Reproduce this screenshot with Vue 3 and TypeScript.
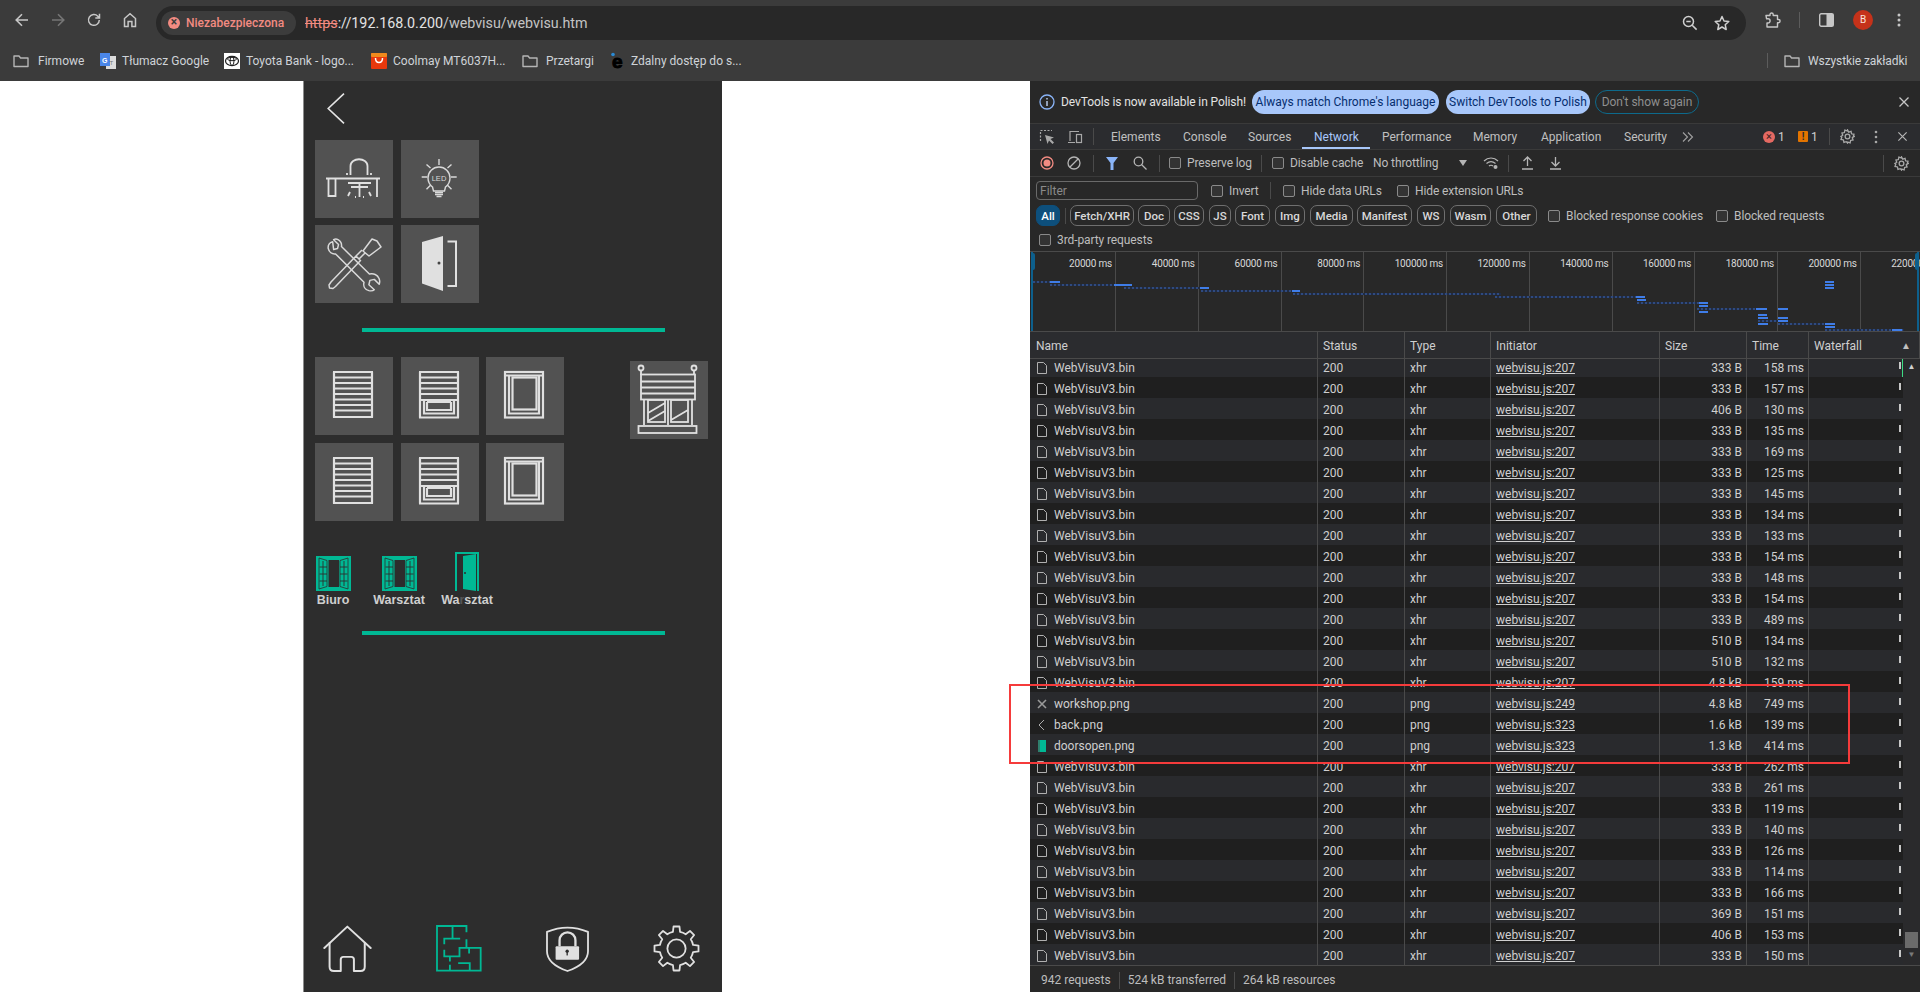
<script setup lang="ts">
const bookmarks = [
  { label: 'Firmowe', icon: 'folder', width: 87, gap: 9 },
  { label: 'Tłumacz Google', icon: 'translate', width: 124, gap: 6 },
  { label: 'Toyota Bank - logo...', icon: 'toyota', width: 147, gap: 6 },
  { label: 'Coolmay MT6037H...', icon: 'coolmay', width: 151, gap: 6 },
  { label: 'Przetargi', icon: 'folder', width: 88, gap: 8 },
  { label: 'Zdalny dostęp do s...', icon: 'e', width: 140, gap: 5 },
]
const tabs = [
  { label: 'Elements', width: 72 },
  { label: 'Console', width: 65 },
  { label: 'Sources', width: 66 },
  { label: 'Network', width: 68, active: true },
  { label: 'Performance', width: 91 },
  { label: 'Memory', width: 68 },
  { label: 'Application', width: 83 },
  { label: 'Security', width: 70 },
]
const chips = [
  { label: 'Fetch/XHR', width: 64, gap: 4 },
  { label: 'Doc', width: 32, gap: 4 },
  { label: 'CSS', width: 30, gap: 5 },
  { label: 'JS', width: 22, gap: 4 },
  { label: 'Font', width: 35, gap: 5 },
  { label: 'Img', width: 30, gap: 5 },
  { label: 'Media', width: 43, gap: 4 },
  { label: 'Manifest', width: 55, gap: 5 },
  { label: 'WS', width: 28, gap: 5 },
  { label: 'Wasm', width: 41, gap: 5 },
  { label: 'Other', width: 41, gap: 0 },
]
const ticks = [20000, 40000, 60000, 80000, 100000, 120000, 140000, 160000, 180000, 200000, 220000]
const bars: [number, number, number, boolean?][] = [
  [281, 3, 25], [281, 20, 10, true], [284, 20, 82], [284, 84, 18, true], [287, 94, 85], [287, 170, 9, true],
  [290, 171, 99], [290, 262, 8, true], [293, 263, 208], [296, 465, 150], [296, 606, 9, true],
  [299, 607, 9, true], [302, 607, 71], [302, 669, 9, true], [305, 669, 9, true], [308, 667, 70], [308, 726, 11, true], [308, 748, 10, true],
  [311, 669, 9, true], [314, 728, 9, true], [317, 728, 10, true], [317, 748, 10, true], [320, 728, 20], [320, 748, 10, true],
  [323, 728, 10, true], [323, 748, 57], [323, 795, 10, true], [326, 795, 10, true], [329, 795, 79], [329, 862, 10, true],
  [281, 795, 9, true], [284, 795, 9, true], [287, 795, 9, true],
]
const rows = [
  ['WebVisuV3.bin', '207', '333 B', '158'], ['WebVisuV3.bin', '207', '333 B', '157'], ['WebVisuV3.bin', '207', '406 B', '130'],
  ['WebVisuV3.bin', '207', '333 B', '135'], ['WebVisuV3.bin', '207', '333 B', '169'], ['WebVisuV3.bin', '207', '333 B', '125'],
  ['WebVisuV3.bin', '207', '333 B', '145'], ['WebVisuV3.bin', '207', '333 B', '134'], ['WebVisuV3.bin', '207', '333 B', '133'],
  ['WebVisuV3.bin', '207', '333 B', '154'], ['WebVisuV3.bin', '207', '333 B', '148'], ['WebVisuV3.bin', '207', '333 B', '154'],
  ['WebVisuV3.bin', '207', '333 B', '489'], ['WebVisuV3.bin', '207', '510 B', '134'], ['WebVisuV3.bin', '207', '510 B', '132'],
  ['WebVisuV3.bin', '207', '4.8 kB', '159'], ['workshop.png', '249', '4.8 kB', '749'], ['back.png', '323', '1.6 kB', '139'],
  ['doorsopen.png', '323', '1.3 kB', '414'], ['WebVisuV3.bin', '207', '333 B', '262'], ['WebVisuV3.bin', '207', '333 B', '261'],
  ['WebVisuV3.bin', '207', '333 B', '119'], ['WebVisuV3.bin', '207', '333 B', '140'], ['WebVisuV3.bin', '207', '333 B', '126'],
  ['WebVisuV3.bin', '207', '333 B', '114'], ['WebVisuV3.bin', '207', '333 B', '166'], ['WebVisuV3.bin', '207', '369 B', '151'],
  ['WebVisuV3.bin', '207', '406 B', '153'], ['WebVisuV3.bin', '207', '333 B', '150'],
].map(([name, line, size, time]) => ({ name, line, size, time, type: name.endsWith('.png') ? 'png' : 'xhr' }))

const fullSlats = [15, 20.5, 26, 31.5, 37, 42.5, 48, 53.5, 60]
const halfSlats = [15, 20.5, 26, 31.5, 37, 43]

function gearPath(cx: number, cy: number, ro: number, ri: number, n: number): string {
  const pt = (r: number, a: number) => `${(cx + r * Math.cos(a)).toFixed(1)} ${(cy + r * Math.sin(a)).toFixed(1)}`
  let d = ''
  for (let i = 0; i < n; i++) {
    const a = (i * 2 * Math.PI) / n - Math.PI / 2
    const step = (2 * Math.PI) / n
    d += `${i === 0 ? 'M' : 'L'}${pt(ri, a - step * 0.27)} L${pt(ro, a - step * 0.17)} L${pt(ro, a + step * 0.17)} L${pt(ri, a + step * 0.27)} A${ri} ${ri} 0 0 1 ${pt(ri, a + step * 0.73)} `
  }
  return d + 'Z'
}
const gearD = gearPath(1130, 145, 68, 52, 8)
</script>

<template>
  <div class="app">
    <header class="toolbar">
      <svg class="nav-ic first" width="16" height="16" viewBox="0 0 16 16"><path d="M14 8H2.5M8 2.2 2.2 8 8 13.8" fill="none" stroke="#c7c7c7" stroke-width="1.6"/></svg>
      <svg class="nav-ic" width="16" height="16" viewBox="0 0 16 16"><path d="M2 8h11.5M8 2.2 13.8 8 8 13.8" fill="none" stroke="#767676" stroke-width="1.6"/></svg>
      <svg class="nav-ic" width="16" height="16" viewBox="0 0 16 16"><path d="M13.3 8a5.4 5.4 0 1 1-1.5-3.8L13.5 6M13.5 1.8V6H9.3" fill="none" stroke="#c7c7c7" stroke-width="1.5"/></svg>
      <svg class="nav-ic" width="16" height="16" viewBox="0 0 16 16"><path d="M2.5 14.5V6.5L8 1.8l5.5 4.7v8h-3.6V9.5H6.1v5z" fill="none" stroke="#c7c7c7" stroke-width="1.5"/></svg>
      <div class="omnibox">
        <div class="chip-warn">
          <span class="warn-dot">×</span>
          <span>Niezabezpieczona</span>
        </div>
        <div class="url"><span class="https">https</span><span class="host">://192.168.0.200</span><span class="path">/webvisu/webvisu.htm</span></div>
        <svg class="omni-ic" width="16" height="16" viewBox="0 0 16 16"><circle cx="6.5" cy="6.5" r="5" fill="none" stroke="#d0d0d0" stroke-width="1.5"/><path d="M4.3 6.5h4.4M10.2 10.2l4.4 4.4" stroke="#d0d0d0" stroke-width="1.5"/></svg>
        <svg class="omni-ic star" width="16" height="16" viewBox="0 0 16 16"><path d="M8 1.5l2 4.5 4.8.5-3.6 3.2 1 4.8L8 12l-4.2 2.5 1-4.8L1.2 6.5 6 6z" fill="none" stroke="#d0d0d0" stroke-width="1.5" stroke-linejoin="round"/></svg>
      </div>
      <svg class="tool-ext" width="16" height="16" viewBox="0 0 16 16"><path d="M1 3.5h4V2.6a1.6 1.6 0 0 1 3.2 0v.9h4.3v4h1a1.6 1.6 0 0 1 0 3.2h-1v4.3H2V11h1a2 2 0 0 0 0-4.2H1.6z" fill="none" stroke="#c7c7c7" stroke-width="1.4" stroke-linejoin="round"/></svg>
      <span class="tool-sep"></span>
      <svg class="tool-side" width="15" height="14" viewBox="0 0 15 14"><rect x=".7" y=".7" width="13.6" height="12.6" rx="1.5" fill="none" stroke="#c7c7c7" stroke-width="1.4"/><rect x="7.5" y="1" width="6.8" height="12" fill="#c7c7c7"/></svg>
      <span class="avatar">B</span>
      <svg class="tool-menu" width="4" height="14" viewBox="0 0 4 14"><circle cx="2" cy="2" r="1.5" fill="#c7c7c7"/><circle cx="2" cy="7" r="1.5" fill="#c7c7c7"/><circle cx="2" cy="12" r="1.5" fill="#c7c7c7"/></svg>
    </header>

    <nav class="bookmarks">
      <div v-for="b in bookmarks" :key="b.label" class="bm" :style="{ width: b.width + 'px', gap: b.gap + 'px' }">
        <svg v-if="b.icon === 'folder'" width="16" height="16" viewBox="0 0 16 16"><path d="M1 3h5l1.6 2H15v8.5H1z" fill="none" stroke="#b5b5b5" stroke-width="1.4" stroke-linejoin="round"/></svg>
        <svg v-else-if="b.icon === 'translate'" width="16" height="16" viewBox="0 0 16 16"><rect x="6" y="3" width="10" height="13" fill="#dcdcdc"/><rect width="10" height="13" fill="#4a86e8"/><text x="2" y="9.5" font-size="7" font-weight="700" fill="#fff" font-family="Liberation Sans, sans-serif">G</text><text x="9.5" y="12" font-size="6" fill="#777" font-family="Liberation Sans, sans-serif">T</text></svg>
        <svg v-else-if="b.icon === 'toyota'" width="16" height="16" viewBox="0 0 16 16"><rect width="16" height="16" fill="#fff"/><ellipse cx="8" cy="8" rx="6.5" ry="4.6" fill="none" stroke="#222" stroke-width="1.2"/><ellipse cx="8" cy="8" rx="2" ry="4.4" fill="none" stroke="#222"/><ellipse cx="8" cy="6" rx="4.5" ry="1.7" fill="none" stroke="#222"/></svg>
        <svg v-else-if="b.icon === 'coolmay'" width="16" height="16" viewBox="0 0 16 16"><rect width="16" height="16" rx="1" fill="#e8380d"/><rect width="16" height="4" rx="1" fill="#f08a1d"/><path d="M4.5 5c0 6 7 6 7 0" fill="none" stroke="#fff" stroke-width="1.5"/></svg>
        <svg v-else width="16" height="18" viewBox="0 0 16 18"><circle cx="3" cy="2.5" r="1.8" fill="#2a8bd6"/><text x="2" y="16" font-size="19" font-weight="700" fill="#000" stroke="#000" font-family="Liberation Sans, sans-serif">e</text></svg>
        <span>{{ b.label }}</span>
      </div>
      <div class="bm-end">
        <span class="bm-sep"></span>
        <svg width="16" height="16" viewBox="0 0 16 16"><path d="M1 3h5l1.6 2H15v8.5H1z" fill="none" stroke="#b5b5b5" stroke-width="1.4" stroke-linejoin="round"/></svg>
        <span>Wszystkie zakładki</span>
      </div>
    </nav>

    <main class="main">
      <section class="page">
        <div class="panel">
          <svg class="back" width="18" height="31" viewBox="0 0 18 31"><path d="M17 .7 1.200 15.500 17 30.300" fill="none" stroke="#e4e4e4" stroke-width="1.600"/></svg>

          <div class="tiles-a">
            <div class="tile">
              <svg viewBox="0 0 78 78" width="78" height="78" fill="none" stroke="#e0e0e0" stroke-width="1.800">
                <path d="M11 38.500H65M13.500 38.500V57M20.500 39V56H13.500M62 39V57"/>
                <path d="M35.500 35V26c0-9 17-9 17 0v9M32 35v-2M56 35v-2"/>
                <path d="M33 43H56M44.500 43V57M36 47h17M35 52l-2 4M54 52l2 4M40 57h1M48 57h1"/>
              </svg>
            </div>
            <div class="tile">
              <svg viewBox="0 0 78 78" width="78" height="78" fill="none" stroke="#d9d9d9" stroke-width="1.400">
                <path d="M31.500 47c-2.500-2-4.500-5-4.500-9a11 11 0 0 1 22 0c0 4-2 7-4.500 9l-1 4H32.500z"/>
                <path d="M34 52.500h8M34 54.500h8M35.500 56.500h5" stroke-width="1.600"/>
                <path d="M38 19v6M25.500 24.500l4 3.500M50.500 24.500l-4 3.500M20.700 37h5.600M50 37h5.700M25.500 49.300l4-4M50.500 49.300l-4-4"/>
                <text x="38" y="40.500" font-size="7.500" fill="#d9d9d9" stroke="none" text-anchor="middle" font-family="Liberation Sans, sans-serif">LED</text>
              </svg>
            </div>
            <div class="tile">
              <svg viewBox="0 0 78 78" width="78" height="78" fill="none" stroke="#d9d9d9" stroke-width="1.500" stroke-linejoin="round">
                <path d="M18 17.500c-3 1-5 3.500-4.500 7 .8 3.500 3.800 6 7.500 5.500L50 59c-1 4 1 7.500 5 8.500 2.500.5 4.500 0 5.500-1L55 61.500l1-4.500 4.500-1 5 5c1.500-4-.5-8.500-4-10-2-1-4-1-6-.5L27 22.500c.5-3-1-5.500-3.500-7-1.500-.8-3-.8-4.500 0l5 5-1 4-4 1z" transform="translate(0 -.5) scale(.98)"/>
                <path d="M48 26 57 14l5 2 4 6-12 9zM50 28l-6 6-3-3 6-6M41 31 16 57l-2 3 .5 3 3.500 .500 2.500-2 25-26z"/>
              </svg>
            </div>
            <div class="tile">
              <svg viewBox="0 0 78 78" width="78" height="78">
                <path d="M21 17 42 11V66L21 58.500z" fill="#e0e0e0"/>
                <circle cx="38" cy="38" r="1.500" fill="#444"/>
                <path d="M46.500 16.500H55V61H46.500" fill="none" stroke="#e0e0e0" stroke-width="2"/>
              </svg>
            </div>
          </div>

          <div class="rule rule-a"></div>

          <div class="shades-row">
            <div class="tiles-b">
              <div v-for="rowIdx in 2" :key="rowIdx" class="tiles-b-row">
                <div class="tile">
                  <svg viewBox="0 0 78 78" width="78" height="78" fill="none" stroke="#e0e0e0" stroke-width="2.200">
                    <path d="M19 15V60.500M57 15V60.500"/>
                    <path v-for="y in fullSlats" :key="y" :d="`M18 ${y}H58`"/>
                  </svg>
                </div>
                <div class="tile">
                  <svg viewBox="0 0 78 78" width="78" height="78" fill="none" stroke="#e0e0e0" stroke-width="2.200">
                    <path d="M19 15V60.500M57 15V60.500M18 60.500H58"/>
                    <path v-for="y in halfSlats" :key="y" :d="`M18 ${y}H58`"/>
                    <path d="M23 43V56.500H53V43M26 45V53H50V45M26 45H50"/>
                  </svg>
                </div>
                <div class="tile">
                  <svg viewBox="0 0 78 78" width="78" height="78" fill="none" stroke="#e0e0e0" stroke-width="2.200">
                    <rect x="19" y="15" width="38" height="45.500"/>
                    <path d="M19 18.500H57"/>
                    <path d="M23 18.500V56.500H53V18.500"/>
                    <rect x="26.500" y="20.500" width="24" height="32"/>
                  </svg>
                </div>
              </div>
            </div>
            <div class="tile tile-side">
              <svg viewBox="0 0 78 78" width="78" height="78" fill="none" stroke="#e0e0e0" stroke-width="1.800">
                <circle cx="11" cy="7" r="2.500"/><circle cx="64" cy="7" r="2.500"/>
                <path d="M11 9.500V14M64 9.500V14"/>
                <rect x="11" y="13.500" width="54" height="25"/>
                <path d="M11 20.500H65M11 26.500H65M11 32.500H65"/>
                <path d="M14 38.500V64M62 38.500V64M38 38.500V64"/>
                <rect x="18" y="39" width="17" height="22"/>
                <rect x="41" y="39" width="17" height="22"/>
                <path d="M18 52 35 42M18 60 35 50M41 59 58 49"/>
                <rect x="8.500" y="65" width="58" height="7"/>
              </svg>
            </div>
          </div>

          <div class="doors">
            <div class="door-item">
              <svg viewBox="0 0 35 35" width="35" height="35">
                <rect width="35" height="35" fill="#00b894"/>
                <path d="M12.500 4H23V31H12.500z" fill="#2d2d2d"/>
                <path d="M3 2 11 4.500V30.500L3 33zM32 2 24 4.500V30.500L32 33z" fill="none" stroke="#2d2d2d" stroke-width=".8"/>
                <path d="M7 5V30M3.500 11H11M3.500 18H11M3.500 25H11M28 5V30M24 11H31.500M24 18H31.500M24 25H31.500" stroke="#2d2d2d" stroke-width=".9"/>
              </svg>
              <span class="door-label">Biuro</span>
            </div>
            <div class="door-item">
              <svg viewBox="0 0 35 35" width="35" height="35">
                <rect width="35" height="35" fill="#00b894"/>
                <path d="M12.500 4H23V31H12.500z" fill="#2d2d2d"/>
                <path d="M3 2 11 4.500V30.500L3 33zM32 2 24 4.500V30.500L32 33z" fill="none" stroke="#2d2d2d" stroke-width=".8"/>
                <path d="M7 5V30M3.500 11H11M3.500 18H11M3.500 25H11M28 5V30M24 11H31.500M24 18H31.500M24 25H31.500" stroke="#2d2d2d" stroke-width=".9"/>
              </svg>
              <span class="door-label">Warsztat</span>
            </div>
            <div class="door-item door-item-last">
              <svg viewBox="0 0 24 39" width="24" height="39">
                <path d="M1 39V1H23V39" fill="none" stroke="#00b894" stroke-width="2"/>
                <path d="M8 4 21 2V39L8 37z" fill="#00b894"/>
                <circle cx="10" cy="21" r="1" fill="#2d2d2d"/>
              </svg>
              <span class="door-label">Wa<span class="faded">r</span>sztat</span>
            </div>
          </div>

          <div class="rule rule-b"></div>

          <div class="bottom-nav">
            <svg viewBox="68 73 149 143" width="49" height="47" fill="none" stroke="#e0e0e0" stroke-width="6" stroke-linecap="round" stroke-linejoin="round">
              <path d="M72 143 142 78 213 143"/>
              <path d="M88 128V200q0 13 13 13H122V178q0-8 8-8H154q8 0 8 8V213H182q13 0 13-13V128"/>
            </svg>
            <svg viewBox="408 76 139 140" width="46" height="47" fill="none" stroke="#00b894" stroke-width="5.500">
              <path d="M500 97V78H411V213H543V144H479V170H433V150M433 133V116H458V78M458 116H481M500 118V144M508 144V161M450 170V185M450 195V213M475 190H510V213"/>
            </svg>
            <svg viewBox="738 74 130 142" width="43" height="47">
              <path d="M741 95q62-26 124 0v58q0 38-62 60-62-22-62-60z" fill="none" stroke="#e0e0e0" stroke-width="5.500" stroke-linejoin="round"/>
              <path d="M779 138v-18a24 24 0 0 1 48 0v18" fill="none" stroke="#e0e0e0" stroke-width="7"/>
              <rect x="767" y="138" width="71" height="41" rx="3" fill="#e0e0e0"/>
              <circle cx="802" cy="153" r="5" fill="#2d2d2d"/>
              <rect x="800" y="153" width="4" height="13" fill="#2d2d2d"/>
            </svg>
            <svg viewBox="1058 73 144 144" width="47" height="47" fill="none" stroke="#e0e0e0" stroke-width="5.500" stroke-linejoin="round">
              <path :d="gearD"/>
              <circle cx="1130" cy="145" r="28"/>
            </svg>
          </div>
        </div>
      </section>

      <section class="devtools">
        <div class="infobar">
          <svg width="16" height="16" viewBox="0 0 16 16"><circle cx="8" cy="8" r="7" fill="none" stroke="#8ab4f8" stroke-width="1.300"/><path d="M8 7v5M8 4v1.600" stroke="#c0d4f5" stroke-width="1.400"/></svg>
          <span class="info-text">DevTools is now available in Polish!</span>
          <span class="pill pill-a">Always match Chrome's language</span>
          <span class="pill pill-b">Switch DevTools to Polish</span>
          <span class="pill pill-c">Don't show again</span>
          <svg class="info-x" width="12" height="12" viewBox="0 0 12 12"><path d="M1.500 1.500l9 9M10.500 1.500l-9 9" stroke="#c7c7c7" stroke-width="1.300"/></svg>
        </div>

        <div class="dt-tabs">
          <svg class="ic-inspect" width="16" height="16" viewBox="0 0 16 16" fill="none" stroke="#a8a8a8" stroke-width="1.200"><path d="M1.500 12V1.500H13" stroke-dasharray="2 1.500"/><path d="M6 6l2.500 9 1.500-3.500L13.500 15l1.500-1.500-3.500-3.500 3.500-1.500z" fill="#a8a8a8" stroke="none"/></svg>
          <svg class="ic-device" width="16" height="16" viewBox="0 0 16 16" fill="none" stroke="#a8a8a8" stroke-width="1.200"><path d="M3 12V2.500h9M1 13.500H8"/><rect x="9.500" y="5.500" width="5" height="8"/></svg>
          <span class="v-sep sep-tabs"></span>
          <div v-for="t in tabs" :key="t.label" class="dt-tab" :class="{ active: t.active }" :style="{ width: t.width + 'px' }">{{ t.label }}</div>
          <svg class="more" width="12" height="10" viewBox="0 0 12 10" fill="none" stroke="#a0a0a0" stroke-width="1.100"><path d="M1 .5 5.500 5 1 9.500M6 .5 10.500 5 6 9.500"/></svg>
          <div class="tab-right">
            <span class="err-dot">×</span><span class="count">1</span>
            <span class="warn-sq">!</span><span class="count">1</span>
            <span class="v-sep"></span>
            <svg width="15" height="15" viewBox="0 0 16 16" fill="none" stroke="#a8a8a8" stroke-width="1.400"><circle cx="8" cy="8" r="2.500"/><path d="M8 1l1.300 2.300 2.500-.8.500 2.600 2.600.5-.8 2.400L15 8l-1.900 1.300.8 2.400-2.600.5-.5 2.600-2.500-.8L8 15l-1.300-1.500-2.500.8-.5-2.600-2.600-.5.8-2.400L1 8l1.900-1.300-.8-2.400 2.600-.5.500-2.600 2.500.8z"/></svg>
            <svg class="dots" width="4" height="14" viewBox="0 0 4 14"><circle cx="2" cy="2" r="1.300" fill="#a8a8a8"/><circle cx="2" cy="7" r="1.300" fill="#a8a8a8"/><circle cx="2" cy="12" r="1.300" fill="#a8a8a8"/></svg>
            <svg width="11" height="11" viewBox="0 0 12 12"><path d="M1.500 1.500l9 9M10.500 1.500l-9 9" stroke="#b5b5b5" stroke-width="1.300"/></svg>
          </div>
        </div>

        <div class="net-bar">
          <svg class="a-record" width="14" height="14" viewBox="0 0 14 14"><circle cx="7" cy="7" r="6" fill="none" stroke="#f28b82" stroke-width="1.300"/><circle cx="7" cy="7" r="3.500" fill="#f28b82"/></svg>
          <svg class="a-clear" width="14" height="14" viewBox="0 0 14 14" fill="none" stroke="#b5b5b5" stroke-width="1.300"><circle cx="7" cy="7" r="6"/><path d="M3 11 11 3"/></svg>
          <span class="v-sep a-sep1"></span>
          <svg class="a-filter" width="12" height="13" viewBox="0 0 12 13"><path d="M0 0h12L7.500 6v7h-3V6z" fill="#8ab4f8"/></svg>
          <svg class="a-search" width="14" height="14" viewBox="0 0 14 14" fill="none" stroke="#b5b5b5" stroke-width="1.300"><circle cx="5.500" cy="5.500" r="4.300"/><path d="M8.500 8.500l5 5"/></svg>
          <span class="v-sep a-sep2"></span>
          <span class="cb a-cb1"></span><span class="lbl a-l1">Preserve log</span>
          <span class="v-sep a-sep3"></span>
          <span class="cb a-cb2"></span><span class="lbl a-l2">Disable cache</span>
          <span class="lbl a-l3">No throttling</span>
          <span class="arrow a-arrow"></span>
          <svg class="a-wifi" width="16" height="14" viewBox="0 0 16 14" fill="none" stroke="#b5b5b5" stroke-width="1.200"><path d="M1 5c4-4 10-4 14 0M3.500 7.500c3-2.500 6-2.500 9 0M6 10c1-1 3-1 4 0"/><circle cx="12.500" cy="11" r="2" fill="#b5b5b5" stroke="none"/></svg>
          <span class="v-sep a-sep4"></span>
          <svg class="a-up" width="13" height="14" viewBox="0 0 13 14" fill="none" stroke="#b5b5b5" stroke-width="1.300"><path d="M6.500 10V1M2.500 5l4-4 4 4M1 13H12"/></svg>
          <svg class="a-down" width="13" height="14" viewBox="0 0 13 14" fill="none" stroke="#b5b5b5" stroke-width="1.300"><path d="M6.500 1v9M2.500 6l4 4 4-4M1 13H12"/></svg>
          <span class="v-sep a-sep5"></span>
          <svg class="a-gear" width="15" height="15" viewBox="0 0 16 16" fill="none" stroke="#a8a8a8" stroke-width="1.400"><circle cx="8" cy="8" r="2.500"/><path d="M8 1l1.300 2.300 2.500-.8.500 2.600 2.600.5-.8 2.400L15 8l-1.900 1.300.8 2.400-2.600.5-.5 2.600-2.500-.8L8 15l-1.300-1.500-2.500.8-.5-2.600-2.600-.5.8-2.400L1 8l1.900-1.300-.8-2.400 2.600-.5.500-2.600 2.500.8z"/></svg>
        </div>

        <div class="filter-row">
          <div class="filter-box">Filter</div>
          <span class="cb f-cb1"></span><span class="lbl f-l1">Invert</span>
          <span class="v-sep f-sep"></span>
          <span class="cb f-cb2"></span><span class="lbl f-l2">Hide data URLs</span>
          <span class="cb f-cb3"></span><span class="lbl">Hide extension URLs</span>
        </div>

        <div class="type-row">
          <span class="chip chip-all">All</span>
          <span class="v-sep chip-sep"></span>
          <span v-for="c in chips" :key="c.label" class="chip" :style="{ width: c.width + 'px', marginRight: c.gap + 'px' }">{{ c.label }}</span>
          <span class="cb t-cb1"></span><span class="lbl t-l1">Blocked response cookies</span>
          <span class="cb t-cb2"></span><span class="lbl">Blocked requests</span>
        </div>

        <div class="third-row">
          <span class="cb"></span><span class="lbl">3rd-party requests</span>
        </div>

        <div class="overview">
          <template v-for="(t, i) in ticks" :key="t">
            <span v-if="i < 10" class="grid-line" :style="{ left: 85 + i * 82.75 + 'px' }"></span>
            <span class="tick" :style="{ right: 890 - (85 + i * 82.75) + 3 + 'px' }">{{ t }} ms</span>
          </template>
          <span v-for="(b, i) in bars" :key="i" class="bar" :class="{ hot: b[3] }" :style="{ top: b[0] - 252 + 'px', left: b[1] + 'px', width: b[2] + 'px' }"></span>
          <span class="handle handle-l"></span>
          <span class="handle handle-r"></span>
        </div>

        <div class="table">
          <div class="cols head">
            <span class="c">Name</span><span class="c">Status</span><span class="c">Type</span><span class="c">Initiator</span><span class="c">Size</span><span class="c">Time</span><span class="c">Waterfall</span>
            <span class="sort">▲</span>
          </div>
          <div class="body">
            <div class="rows">
              <div v-for="(r, i) in rows" :key="i" class="cols row" :class="{ odd: i % 2 === 0 }">
                <span class="c name">
                  <svg v-if="r.name === 'workshop.png'" width="10" height="12" viewBox="0 0 10 12" fill="none" stroke="#9a9a9a" stroke-width="1.600"><path d="M1 2l8 8M9 2l-8 8"/></svg>
                  <svg v-else-if="r.name === 'back.png'" width="10" height="12" viewBox="0 0 10 12" fill="none" stroke="#bdbdbd" stroke-width=".9"><path d="M7 1 2 6l5 5"/></svg>
                  <svg v-else-if="r.name === 'doorsopen.png'" width="10" height="12" viewBox="0 0 10 12"><rect x="3" width="6" height="12" fill="#00b894"/><rect x="1" width="2" height="12" fill="#2f7f6d"/></svg>
                  <svg v-else width="10" height="12" viewBox="0 0 10 12" fill="none" stroke="#b0b0b0"><path d="M.5.500H6.500L9.500 3.500V11.500H.5z"/></svg>
                  <span>{{ r.name }}</span>
                </span>
                <span class="c">200</span>
                <span class="c">{{ r.type }}</span>
                <span class="c link">webvisu.js:{{ r.line }}</span>
                <span class="c num">{{ r.size }}</span>
                <span class="c num">{{ r.time }} ms</span>
                <span class="c wf"><i class="wf-tick"></i><i v-if="i === 0" class="wf-green"></i></span>
              </div>
            </div>
            <div class="scroll">
              <span class="sc-up">▲</span>
              <span class="sc-thumb"></span>
              <span class="sc-down">▼</span>
            </div>
          </div>
        </div>

        <footer class="status">
          <span>942 requests</span><span class="v-sep"></span>
          <span>524 kB transferred</span><span class="v-sep"></span>
          <span>264 kB resources</span>
        </footer>
      </section>
    </main>

    <div class="red-box"></div>
  </div>
</template>

<style>
html, body { margin: 0; background: #fff; overflow: hidden; }
</style>

<style scoped>
.app { position: relative; width: 1920px; height: 992px; display: flex; flex-direction: column; overflow: hidden; font-family: "Roboto", "Liberation Sans", sans-serif; font-size: 12px; color: #d5d5d5; }

.toolbar { height: 40px; flex: none; background: #3b3b3b; display: flex; align-items: center; position: relative; }
.nav-ic { margin-right: 20px; flex: none; }
.nav-ic.first { margin-left: 14px; }
.omnibox { width: 1590px; height: 34px; margin-left: -2px; margin-top: 6px; background: #282828; border-radius: 17px; display: flex; align-items: center; box-sizing: border-box; padding-left: 5px; }
.chip-warn { width: 135px; height: 24px; flex: none; border-radius: 12px; background: #3c3c3c; color: #f28b82; display: flex; align-items: center; gap: 6px; padding-left: 7px; box-sizing: border-box; font-size: 12px; font-weight: 500; }
.warn-dot { width: 12px; height: 12px; border-radius: 50%; background: #f28b82; color: #3c3c3c; font-size: 12px; line-height: 11px; text-align: center; font-weight: 700; }
.url { margin-left: 9px; font-size: 14.300px; flex: 1; white-space: nowrap; }
.https { color: #f28b82; text-decoration: line-through; }
.host { color: #e3e3e3; }
.path { color: #c4c4c4; }
.omni-ic { flex: none; margin-right: 16px; }
.omni-ic.star { margin-right: 16px; }
.tool-ext { margin-left: 19px; flex: none; }
.tool-sep { width: 1px; height: 16px; background: #5c5c5c; margin-left: 18px; flex: none; }
.tool-side { margin-left: 19px; flex: none; }
.avatar { width: 20px; height: 20px; border-radius: 50%; background: #c5321a; color: #fbe2dc; font-size: 10px; line-height: 20px; text-align: center; margin-left: 19px; flex: none; }
.tool-menu { margin-left: 24px; flex: none; }

.bookmarks { height: 41px; flex: none; background: #3b3b3b; display: flex; align-items: center; padding-left: 13px; box-sizing: border-box; }
.bm { display: flex; align-items: center; flex: none; color: #cfd3d8; font-size: 12px; white-space: nowrap; }
.bm svg { flex: none; }
.bm-end { margin-left: auto; width: 153px; display: flex; align-items: center; color: #cfd3d8; font-size: 12px; flex: none; letter-spacing: -.1px; }
.bm-sep { width: 1px; height: 15px; background: #5c5c5c; margin-right: 16px; }
.bm-end svg { margin-right: 8px; }

.main { flex: 1; display: flex; min-height: 0; }
.page { width: 1030px; flex: none; background: #fff; }
.panel { margin-left: 303px; width: 419px; height: 100%; box-sizing: border-box; border-left: 1px solid #8c8c8c; background: #2d2d2d; display: flex; flex-direction: column; padding-left: 11px; }
.back { display: block; margin: 12px 0 0 12px; }
.tile { width: 78px; height: 78px; background: #525252; flex: none; }
.tile svg { display: block; }
.tiles-a { display: grid; grid-template-columns: 78px 78px; column-gap: 8px; row-gap: 7px; margin-top: 16px; }
.rule { width: 303px; height: 4px; background: #00b894; margin-left: 47px; flex: none; }
.rule-a { margin-top: 25px; }
.rule-b { margin-top: 24px; }
.shades-row { display: flex; align-items: flex-start; margin-top: 25px; }
.tiles-b { display: flex; flex-direction: column; gap: 8px; }
.tiles-b-row { display: flex; }
.tiles-b-row .tile:nth-child(2) { margin-left: 8px; margin-right: 7px; }
.tile-side { margin-left: 66px; margin-top: 4px; }
.doors { display: flex; align-items: flex-end; margin-top: 31px; }
.door-item { width: 36px; display: flex; flex-direction: column; align-items: center; margin-right: 30px; }
.door-item-last { margin-left: 2px; margin-right: 0; }
.door-item svg { display: block; }
.door-label { font-family: "Liberation Sans", sans-serif; font-weight: 700; font-size: 12.500px; line-height: 14px; color: #cfcfcf; white-space: nowrap; margin-top: 2px; }
.faded { opacity: .25; }
.bottom-nav { margin-top: auto; display: flex; gap: 64px; padding: 0 0 20px 8px; }
.bottom-nav svg { display: block; flex: none; }

.devtools { width: 890px; flex: none; background: #282828; display: flex; flex-direction: column; min-height: 0; color: #cfcfcf; }
.v-sep { width: 1px; height: 17px; background: #4a4a4a; flex: none; display: inline-block; }
.infobar { height: 43px; flex: none; display: flex; align-items: center; padding-left: 9px; box-sizing: border-box; background: #282828; border-bottom: 1px solid #3a3a3a; position: relative; font-size: 12px; }
.info-text { margin-left: 6px; width: 191px; color: #e3e3e3; white-space: nowrap; flex: none; letter-spacing: -.1px; }
.pill { height: 24px; border-radius: 12px; display: flex; align-items: center; justify-content: center; box-sizing: border-box; flex: none; white-space: nowrap; }
.pill-a { width: 187px; background: #a8c7fa; color: #062e6f; }
.pill-b { width: 144px; background: #a8c7fa; color: #062e6f; margin-left: 7px; }
.pill-c { width: 104px; border: 1.500px solid #0d6a8c; color: #8f8f8f; margin-left: 5px; }
.info-x { margin-left: auto; margin-right: 10px; }

.dt-tabs { height: 26px; flex: none; display: flex; align-items: center; background: #2b2c2f; border-bottom: 1px solid #3a3a3a; padding-left: 9px; box-sizing: border-box; }
.ic-device { margin-left: 12px; }
.sep-tabs { margin-left: 10px; margin-right: 5px; }
.dt-tab { height: 100%; flex: none; box-sizing: border-box; padding-left: 12px; line-height: 26px; color: #c0c0c0; white-space: nowrap; }
.dt-tab.active { color: #a8c7fa; border-bottom: 2px solid #a8c7fa; }
.more { margin-left: 0; flex: none; }
.tab-right { margin-left: auto; display: flex; align-items: center; padding-right: 12px; }
.err-dot { width: 12px; height: 12px; border-radius: 50%; background: #e46962; color: #3a2020; line-height: 11px; font-size: 11px; text-align: center; }
.warn-sq { width: 10px; height: 11px; background: #e37400; color: #2b2c2f; line-height: 11px; font-size: 10px; text-align: center; margin-left: 12px; font-weight: 700; border-radius: 1px; }
.count { margin-left: 3px; width: 8px; }
.tab-right .v-sep { margin: 0 10px 0 10px; }
.dots { margin: 0 19px 0 19px; }

.net-bar { height: 27px; flex: none; display: flex; align-items: center; background: #282828; border-bottom: 1px solid #3a3a3a; padding-left: 10px; box-sizing: border-box; }
.cb { width: 12px; height: 12px; box-sizing: border-box; border: 1px solid #8a8a8a; border-radius: 2px; flex: none; background: #333; display: inline-block; }
.lbl { color: #bdbdbd; white-space: nowrap; flex: none; letter-spacing: -.1px; }
.a-clear { margin-left: 13px; }
.a-sep1 { margin-left: 12px; }
.a-filter { margin-left: 12px; }
.a-search { margin-left: 15px; }
.a-sep2 { margin-left: 12px; }
.a-cb1 { margin-left: 9px; }
.a-l1 { margin-left: 6px; width: 73px; }
.a-sep3 { margin-left: 1px; }
.a-cb2 { margin-left: 10px; }
.a-l2 { margin-left: 6px; width: 83px; }
.a-l3 { width: 85px; }
.arrow { width: 0; height: 0; border-left: 4px solid transparent; border-right: 4px solid transparent; border-top: 6px solid #b5b5b5; flex: none; }
.a-arrow { margin-left: 1px; }
.a-wifi { margin-left: 16px; }
.a-sep4 { margin-left: 9px; }
.a-up { margin-left: 12px; }
.a-down { margin-left: 15px; }
.a-sep5 { margin-left: 321px; }
.a-gear { margin-left: 10px; }

.filter-row { height: 26px; flex: none; display: flex; align-items: center; padding: 1px 0 0 6px; box-sizing: border-box; }
.filter-box { width: 162px; height: 19px; box-sizing: border-box; border: 1px solid #6a6a6a; border-radius: 4px; padding-left: 3px; line-height: 18px; color: #8a8a8a; flex: none; }
.f-cb1 { margin-left: 13px; }
.f-l1 { margin-left: 6px; width: 36px; }
.f-sep { margin-left: 5px; }
.f-cb2 { margin-left: 12px; }
.f-l2 { margin-left: 6px; width: 90px; }
.f-cb3 { margin-left: 6px; margin-right: 6px; }

.type-row { height: 25px; flex: none; display: flex; align-items: center; padding-left: 6px; box-sizing: border-box; }
.chip { height: 21px; box-sizing: border-box; border: 1px solid #6f6f6f; border-radius: 7px; display: flex; align-items: center; justify-content: center; color: #d8d8d8; font-weight: 500; font-size: 11.500px; flex: none; white-space: nowrap; }
.chip-all { width: 24px; background: #0d4f7c; border-color: #0d4f7c; color: #fff; }
.chip-sep { margin: 0 4px 0 5px; height: 16px; }
.t-cb1 { margin-left: 11px; }
.t-l1 { margin-left: 6px; width: 150px; }
.t-cb2 { margin-right: 6px; }

.third-row { height: 23px; flex: none; display: flex; align-items: center; gap: 6px; padding-left: 9px; box-sizing: border-box; }

.overview { height: 81px; flex: none; position: relative; border-top: 1px solid #4a4a4a; border-bottom: 1px solid #4a4a4a; box-sizing: border-box; overflow: hidden; background: #282828; }
.overview::before, .overview::after { content: ""; position: absolute; top: 0; bottom: 0; width: 2px; background: #0d5f8c; }
.overview::before { left: 1px; }
.overview::after { right: 1px; }
.grid-line { position: absolute; top: 0; bottom: 0; width: 1px; background: #4a4a4a; }
.tick { position: absolute; top: 5px; font-size: 10px; letter-spacing: -.2px; line-height: 14px; color: #d8d8d8; white-space: nowrap; }
.bar { position: absolute; height: 2px; background: repeating-linear-gradient(90deg, #2f4a80 0 2px, #202c44 2px 4px); }
.bar.hot { background: #3f7de8; height: 2px; }
.handle { position: absolute; top: 1px; width: 4px; height: 17px; background: #0d5f8c; border-radius: 2px; z-index: 1; }
.handle-l { left: 1px; }
.handle-r { right: 1px; }

.table { flex: 1; min-height: 0; display: flex; flex-direction: column; position: relative; }
.cols { display: grid; grid-template-columns: 288px 87px 86px 169px 87px 62px 1fr; }
.head { height: 27px; flex: none; background: #2b2c2f; border-bottom: 1px solid #4a4a4a; box-sizing: border-box; position: relative; }
.c { padding: 0 5px; border-right: 1px solid #4a4a4a; box-sizing: border-box; line-height: 29px; white-space: nowrap; overflow: hidden; color: #cfcfcf; }
.head .c:first-child { padding-left: 6px; }
.head .c:last-of-type { border-right: none; padding-left: 4px; }
.sort { position: absolute; right: 9px; top: 0; line-height: 27px; font-size: 10px; color: #c0c0c0; }
.body { flex: 1; min-height: 0; display: flex; overflow: hidden; }
.rows { flex: 1; margin-top: -3px; min-width: 0; }
.row { height: 21px; background: #1f1f1f; }
.row.odd { background: #292a2d; }
.row .c { line-height: 21px; padding-top: 2px; }
.row .name { display: flex; align-items: flex-start; gap: 7px; padding-left: 7px; }
.name svg { flex: none; margin-top: 4px; }
.link { text-decoration: underline; }
.num { text-align: right; padding-right: 4px; }
.wf { position: relative; border-right: none; }
.wf-tick { position: absolute; right: 2px; top: 6px; width: 2px; height: 7px; background: #c7c7c7; }
.wf-green { position: absolute; right: 0; top: 3px; width: 1px; height: 18px; background: #3ddc84; }
.scroll { width: 17px; flex: none; background: #2a2a2c; position: relative; display: flex; flex-direction: column; align-items: center; }
.sc-up { font-size: 8px; line-height: 16px; color: #d0d0d0; }
.sc-thumb { position: absolute; top: 573px; left: 2px; width: 13px; height: 16px; background: #6b6b6b; }
.sc-down { margin-top: auto; font-size: 8px; line-height: 20px; color: #7a7a7a; }

.status { height: 27px; flex: none; border-top: 1px solid #4a4a4a; box-sizing: border-box; display: flex; align-items: center; gap: 8px; padding: 2px 0 0 11px; color: #bdbdbd; background: #282828; }

.red-box { position: absolute; left: 1009px; top: 684px; width: 841px; height: 80px; box-sizing: border-box; border: 2px solid #f53b3b; pointer-events: none; }
</style>
